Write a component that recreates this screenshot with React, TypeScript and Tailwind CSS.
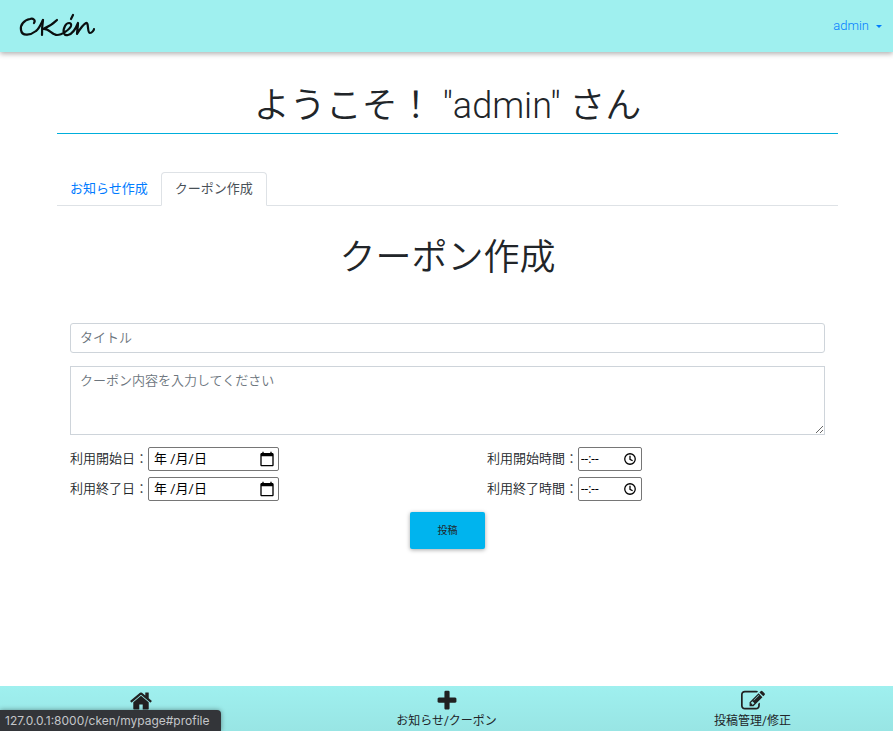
import React, { useState } from "react";

function Logo() {
  return (
    <svg
      viewBox="0 0 80 30"
      className="h-[30px] w-20"
      fill="none"
      stroke="#0b0f0f"
      strokeWidth="2.2"
      strokeLinecap="round"
      strokeLinejoin="round"
      role="img"
      aria-label="CKén"
    >
      <path d="M16 12 C18 9 15 7 12 8 C6 9 2 14 3 19 C4 26 13 24 18 20 C21 18 23 13 25 9" />
      <path d="M25 9 C24 15 24 20 24 24" />
      <path d="M39 9 C35 13 30 16 25 18 C31 17 34 24 39 24 C44 24 52 18 53 15 C54 11 49 11 47 15 C44 21 46 25 50 24 C55 23 58 17 60 12 C60 16 59 20 59 23 C62 18 66 13 68 12 C71 11 69 22 72 22 C74 22 76 19 76 18" />
      <path d="M53 8 L55 4" />
    </svg>
  );
}

function CalendarIcon() {
  return (
    <svg viewBox="0 0 24 24" className="size-4" fill="#000" aria-hidden="true">
      <path d="M20 3h-1V1h-2v2H7V1H5v2H4c-1.1 0-2 .9-2 2v16c0 1.1.9 2 2 2h16c1.1 0 2-.9 2-2V5c0-1.1-.9-2-2-2zm0 18H4V8h16v13z" />
    </svg>
  );
}

function ClockIcon() {
  return (
    <svg viewBox="0 0 24 24" className="size-[14px]" fill="none" stroke="#000" strokeWidth="2.2" aria-hidden="true">
      <circle cx="12" cy="12" r="9" />
      <path d="M12 6.5V12.5L16.5 15" />
    </svg>
  );
}

function NavIcon({ path }: { path: string }) {
  return (
    <svg viewBox="0 0 1792 1792" className="size-6" fill="#212121" aria-hidden="true">
      <path d={path} />
    </svg>
  );
}

const homePath =
  "M1472 992v480q0 26-19 45t-45 19h-384v-384h-256v384h-384q-26 0-45-19t-19-45v-480q0-1 .5-3t.5-3l575-474 575 474q1 2 1 6zm223-69l-62 74q-8 9-21 11h-3q-13 0-21-7l-692-577-692 577q-12 8-24 7-13-2-21-11l-62-74q-8-10-7-23.5t11-21.5l719-599q32-26 76-26t76 26l244 204v-195q0-14 9-23t23-9h192q14 0 23 9t9 23v408l219 182q10 8 11 21.5t-7 23.5z";
const plusPath =
  "M1600 736v192q0 40-28 68t-68 28h-416v416q0 40-28 68t-68 28h-192q-40 0-68-28t-28-68v-416h-416q-40 0-68-28t-28-68v-192q0-40 28-68t68-28h416v-416q0-40 28-68t68-28h192q40 0 68 28t28 68v416h416q40 0 68 28t28 68z";
const editPath =
  "M888 1184l116-116-152-152-116 116v56h96v96h56zm440-720q-16-16-33 1l-350 350q-17 17-1 33t33-1l350-350q17-17 1-33zm80 594v190q0 119-84.5 203.5t-203.5 84.5h-832q-119 0-203.5-84.5t-84.5-203.5v-832q0-119 84.5-203.5t203.5-84.5h832q63 0 117 25 15 7 18 23 3 17-9 29l-49 49q-14 14-32 8-23-6-45-6h-832q-66 0-113 47t-47 113v832q0 66 47 113t113 47h832q66 0 113-47t47-113v-126q0-13 9-22l64-64q15-15 35-7t20 29zm-96-738l288 288-672 672h-288v-288zm444 132l-92 92-288-288 92-92q28-28 68-28t68 28l152 152q28 28 28 68t-28 68z";

type PickerProps = { id: string; label: string; kind: "date" | "time" };

function PickerField({ id, label, kind }: PickerProps) {
  const isDate = kind === "date";
  return (
    <div className="flex h-6 items-center">
      <label htmlFor={id} className="shrink-0 font-[350]">
        {label}
      </label>
      <div
        className={`flex h-6 items-center justify-between rounded-xs border border-[#767676] bg-white ${
          isDate ? "w-[131px] pr-[3px] pl-[5px]" : "w-[64px] pr-1 pl-[2px]"
        }`}
      >
        <input
          id={id}
          type="text"
          placeholder={isDate ? "年 /月/日" : "--:--"}
          className="w-0 min-w-0 flex-1 bg-transparent text-black outline-none placeholder:text-black"
        />
        <button type="button" aria-label={`${label}選択`} className="shrink-0">
          {isDate ? <CalendarIcon /> : <ClockIcon />}
        </button>
      </div>
    </div>
  );
}

const tabs = ["お知らせ作成", "クーポン作成"];

export default function App() {
  const [active, setActive] = useState(1);

  return (
    <div className="flex min-h-screen flex-col bg-white font-[Roboto,'Noto_Sans_CJK_JP',sans-serif] text-[13px] leading-5 text-[#212529]">
      <header className="flex h-[52px] items-center justify-between bg-[#9ff0ef] pr-[11px] pl-[18px] shadow-[0_2px_5px_rgba(0,0,0,0.3)]">
        <a href="#top">
          <Logo />
        </a>
        <button type="button" className="flex items-center gap-[7px] font-[350] text-[#007bff]">
          admin
          <span className="border-x-[3px] border-t-[3px] border-x-transparent border-t-[#007bff]" />
        </button>
      </header>

      <main className="flex-1 pr-[55px] pl-[57px]">
        <h1 className="mt-[31px] border-b border-[#00aedb] pb-[3px] text-center text-4xl leading-[47px] font-[350]">
          ようこそ！ <span className="font-light">"admin"</span> さん
        </h1>

        <div role="tablist" className="mt-[38px] flex border-b border-[#dee2e6]">
          {tabs.map((tab, i) => (
            <button
              key={tab}
              type="button"
              role="tab"
              aria-selected={active === i}
              onClick={() => setActive(i)}
              className={
                active === i
                  ? "-mb-px h-[34px] rounded-t border border-[#dee2e6] border-b-white bg-white px-[13px] text-[#495057]"
                  : "h-[33px] px-[13px] text-[#007bff]"
              }
            >
              {tab}
            </button>
          ))}
        </div>

        <section className="px-[13px]">
          <h2 className="pt-[29px] text-center text-4xl leading-[47px] font-[350]">クーポン作成</h2>
          <form className="mt-[41px]" onSubmit={(e) => e.preventDefault()}>
            <input
              type="text"
              aria-label="タイトル"
              placeholder="タイトル"
              className="block h-[30px] w-full rounded-[3px] border border-[#ced4da] px-[9px] pb-[2px] font-[350] outline-none placeholder:text-[#6c757d]"
            />
            <textarea
              aria-label="クーポン内容"
              placeholder="クーポン内容を入力してください"
              className="mt-[13px] block h-[69px] w-full resize border border-[#ced4da] px-[9px] py-1 font-[350] outline-none placeholder:text-[#6c757d]"
            />
            <div className="mt-3 grid grid-cols-[417fr_338fr] gap-y-[6px]">
              <PickerField id="start-date" label="利用開始日：" kind="date" />
              <PickerField id="start-time" label="利用開始時間：" kind="time" />
              <PickerField id="end-date" label="利用終了日：" kind="date" />
              <PickerField id="end-time" label="利用終了時間：" kind="time" />
            </div>
            <button
              type="submit"
              className="mx-auto mt-[11px] block h-[37px] w-[75px] rounded-xs bg-[#00b4ee] text-[10px] shadow-[0_1px_4px_rgba(0,0,0,0.35)]"
            >
              投稿
            </button>
          </form>
        </section>
      </main>

      <nav className="relative flex h-[45px] justify-between bg-linear-to-b from-[#9ff0ef] to-[#98e5e4] pr-[102px] pl-[103px] text-xs leading-4">
        <a href="#mypage" aria-label="ホーム" className="flex w-[76px] flex-col items-center pt-[3px]">
          <NavIcon path={homePath} />
        </a>
        <a href="#news" className="flex flex-col items-center pt-[3px]">
          <NavIcon path={plusPath} />
          お知らせ/クーポン
        </a>
        <a href="#manage" className="flex flex-col items-center pt-[3px]">
          <NavIcon path={editPath} />
          投稿管理/修正
        </a>
        <div className="absolute bottom-0 left-0 flex h-[21px] w-[221px] items-center rounded-tr bg-[#333539] pl-[5px] font-[Inter,sans-serif] text-xs whitespace-nowrap text-[#c4c6c9] shadow-[0_0_5px_rgba(0,0,0,0.4)]">
          127.0.0.1:8000/cken/mypage#profile
        </div>
      </nav>
    </div>
  );
}
